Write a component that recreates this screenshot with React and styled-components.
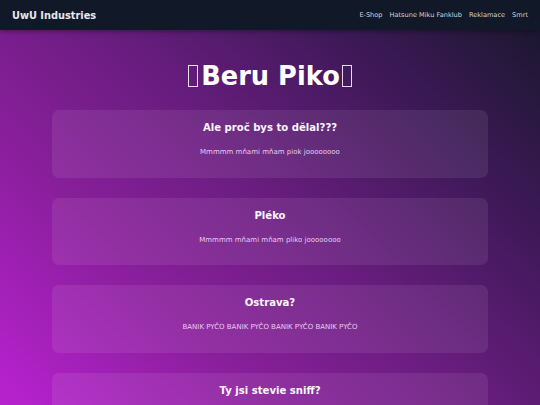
import React from 'react'
import styled, { createGlobalStyle } from 'styled-components'

const GlobalStyle = createGlobalStyle`
  html, body {
    margin: 0;
    padding: 0;
  }
  body {
    font-family: "DejaVu Sans", "Noto Sans", sans-serif;
    color: #fff;
    background: linear-gradient(45deg, #b822d0 0%, #8a1f9c 28%, #6a1d80 50%, #3e1958 75%, #16172a 100%);
    background-attachment: fixed;
    min-height: 100vh;
  }
`;

const Nav = styled.nav`
    height: 30px;
    background-color: #111827;
    display: flex;
    align-items: center;
    justify-content: space-between;
    padding: 0 12px;
    box-shadow: 0 2px 4px rgba(0,0,0,0.3);
`;
const Brand = styled.div`
    font-size: 9.8px;
    font-weight: 700;
    color: #e5e7eb;
`;
const Links = styled.div`
    display: flex;
    gap: 7px;
`;
const Link = styled.a`
    font-size: 6.6px;
    color: #d1d5db;
    text-decoration: none;
`;
const Main = styled.main`
    padding: 31px 52px 40px;
    display: flex;
    flex-direction: column;
    gap: 20px;
`;
const Title = styled.h1`
    margin: 0 0 -1px;
    text-align: center;
    font-size: 25.7px;
    font-weight: 700;
    line-height: 30px;
    display: flex;
    align-items: center;
    justify-content: center;
`;
/* missing-glyph box, the emoji is not in the page fonts */
const Tofu = styled.span`
    display: inline-block;
    box-sizing: border-box;
    width: 10px;
    height: 22px;
    border: 1.4px solid rgba(255,255,255,0.85);
    margin: 0 ${(p) => (p.$side === 'left' ? '3px 0 1px' : '1px 0 2px')};
`;
const Card = styled.section`
    background: rgba(255,255,255,0.08);
    border-radius: 7px;
    height: 67.6px;
    box-sizing: border-box;
    padding-top: 10px;
    text-align: center;
`;
const CardTitle = styled.h2`
    margin: 0;
    font-size: 10.1px;
    font-weight: 700;
    line-height: 16px;
    color: #fbf5ff;
`;
const CardText = styled.p`
    margin: 11px 0 0;
    font-size: 7px;
    line-height: 10px;
    color: #e6cdee;
`;

const cards = [
  { title: 'Ale proč bys to dělal???', text: 'Mmmmm mňami mňam piok joooooooo' },
  { title: 'Pléko', text: 'Mmmmm mňami mňam pliko joooooooo' },
  { title: 'Ostrava?', text: 'BANIK PYČO BANIK PYČO BANIK PYČO BANIK PYČO' },
  { title: 'Ty jsi stevie sniff?', text: 'Stevie sniff je nejlepší' },
]

const App = () => {
  return (
    <>
      <GlobalStyle />
      <Nav>
        <Brand>UwU Industries</Brand>
        <Links>
          <Link href="#">E-Shop</Link>
          <Link href="#">Hatsune Miku Fanklub</Link>
          <Link href="#">Reklamace</Link>
          <Link href="#">Smrt</Link>
        </Links>
      </Nav>
      <Main>
        <Title>
          <Tofu $side="left" title="🍆" />
          Beru Piko
          <Tofu $side="right" title="🍆" />
        </Title>
        {cards.map((c) => (
          <Card key={c.title}>
            <CardTitle>{c.title}</CardTitle>
            <CardText>{c.text}</CardText>
          </Card>
        ))}
      </Main>
    </>
  )
}

export default App
